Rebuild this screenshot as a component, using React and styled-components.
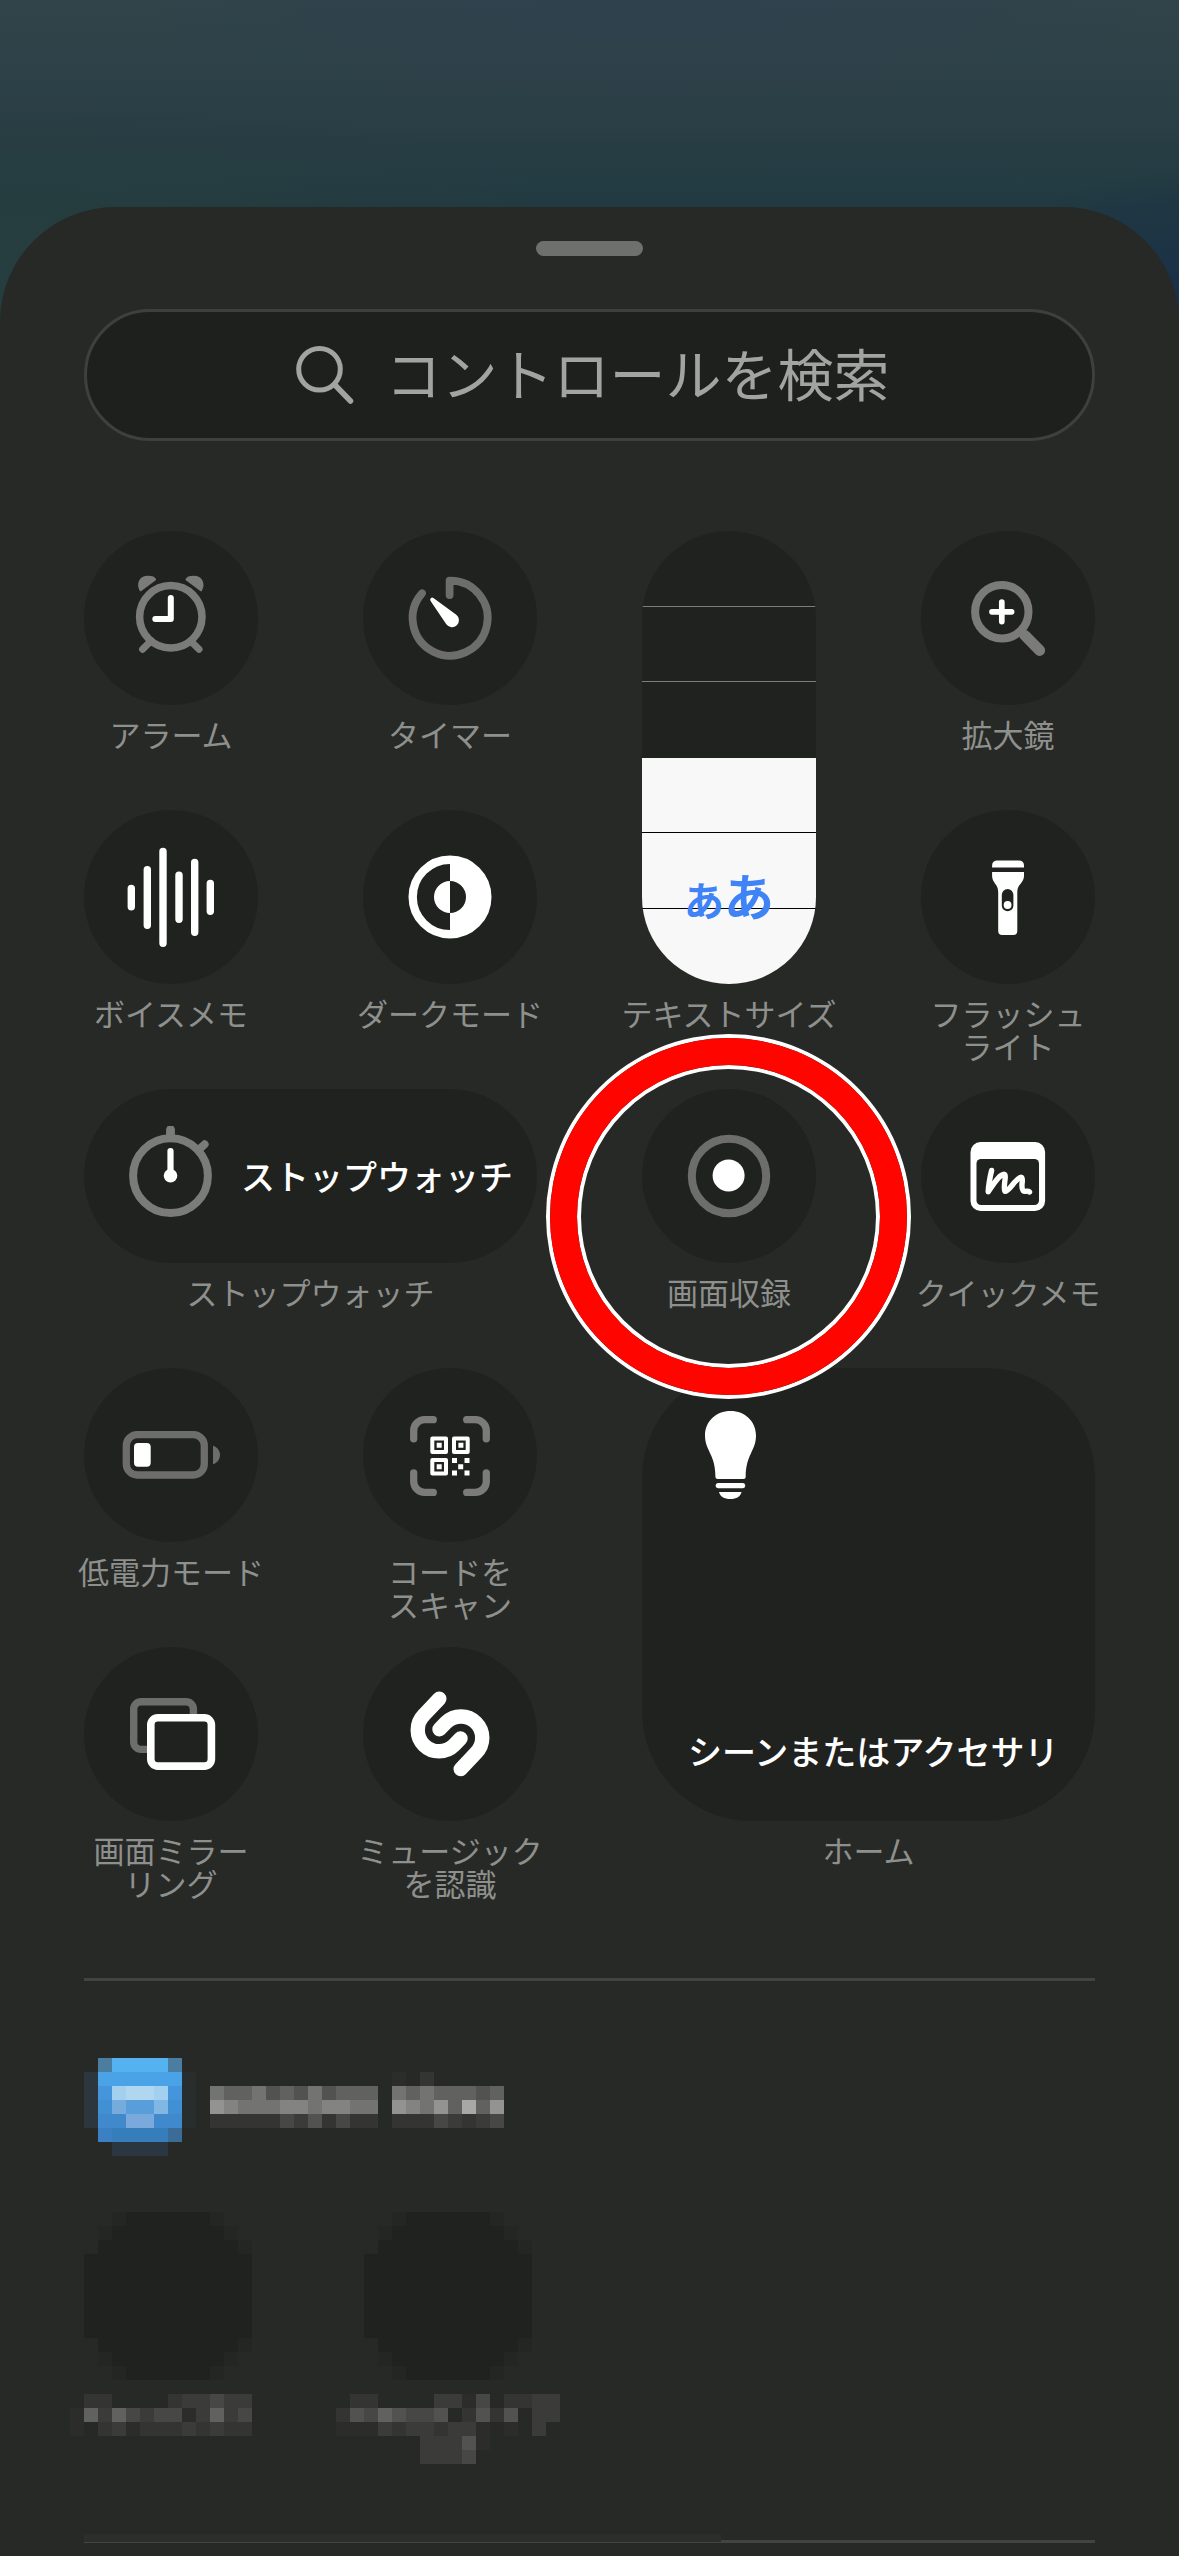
import React, { useState } from 'react';
import styled, { createGlobalStyle } from 'styled-components';

const GlobalStyle = createGlobalStyle`
body {
  margin: 0;
  background: #272926;
  font-family: "Noto Sans CJK JP", "Noto Sans", sans-serif;
}

* {
  box-sizing: border-box;
}
`;

const Page = styled.main`
min-height: 100vh;
display: flex;
flex-direction: column;
padding-top: 207px;
background:
  radial-gradient(ellipse 200px 130px at 100% 300px, #1a2f48 0%, transparent 100%),
  radial-gradient(ellipse 600px 160px at 0 250px, #273e3f 0%, transparent 100%),
  radial-gradient(ellipse 500px 110px at 55% 0, #30414e 0%, transparent 100%),
  linear-gradient(#30444a 0, #2b3f46 110px, #213a41 207px, #1f3a42 400px);
`;

const Sheet = styled.section`
flex: 1;
display: flex;
flex-direction: column;
padding: 34px 84px 13px;
border-radius: 115px 115px 0 0;
background: #272926;
`;

const Grabber = styled.div`
align-self: center;
width: 107px;
height: 15px;
border-radius: 8px;
background: #6e706e;
`;

const SearchBar = styled.label`
display: flex;
align-items: center;
justify-content: center;
gap: 32px;
height: 132px;
margin-top: 53px;
padding-left: 6px;
border: 3px solid #3e403d;
border-radius: 66px;
background: #1e201d;
color: #a2a4a1;
`;

const SearchInput = styled.input`
width: 504px;
padding: 0 0 6px;
border: 0;
outline: 0;
background: transparent;
color: inherit;
font-family: inherit;
font-size: 56px;
line-height: 80px;

&::placeholder {
  color: #a2a4a1;
  opacity: 1;
}
`;

const Grid = styled.div`
display: grid;
grid-template-columns: repeat(4, minmax(0, 1fr));
grid-auto-rows: 279px;
column-gap: 105px;
margin-top: 90px;
`;

const Tile = styled.div`
position: relative;
display: flex;
flex-direction: column;
align-items: center;
grid-column: span ${props => props.$cols || 1};
grid-row: span ${props => props.$rows || 1};
`;

const Face = styled.button`
flex: 1;
display: flex;
align-items: center;
justify-content: center;
width: 100%;
padding: 0;
border: 0;
border-radius: 87px;
background: #20221f;
color: #fff;
font-family: inherit;
font-size: 34px;
font-weight: 500;
line-height: 40px;
`;

const WideFace = styled(Face)`
justify-content: flex-start;
gap: 20px;
padding-left: 37px;
`;

const LargeFace = styled(Face)`
flex-direction: column;
align-items: flex-start;
justify-content: space-between;
padding: 37px 0 50px 37px;
border-radius: 110px;
`;

const FaceText = styled.span`
padding-left: ${props => props.$indent || 0}px;
white-space: nowrap;
`;

const Label = styled.label`
height: 105px;
padding-top: 12px;
color: #8e908d;
font-size: 31px;
line-height: 33px;
text-align: center;
white-space: pre;
`;

const SliderFrame = styled.div`
position: relative;
flex: 1;
display: flex;
width: 100%;
min-height: 0;
`;

// one hairline across the slider at the given sixth of its height
const tick = (sixth, color) => {
  const at = `round(down, ${sixth} * 100% / 6, 1px)`;
  return `transparent ${at}, ${color} ${at}, ${color} calc(${at} + 1px), transparent calc(${at} + 1px)`;
};

const Slider = styled.input`
writing-mode: vertical-lr;
direction: rtl;
appearance: none;
width: 100%;
height: 100%;
margin: 0;
border-radius: 87px;
background:
  linear-gradient(${tick(1, '#7d7e7c')}, ${tick(2, '#7d7e7c')}, ${tick(4, '#000')}, ${tick(5, '#000')}),
  linear-gradient(to top, #f8f8f8 ${props => props.$fill}%, #20221f ${props => props.$fill}%);

&::-webkit-slider-thumb {
  appearance: none;
  width: 1px;
  height: 1px;
}
`;

const SizeMark = styled.span`
position: absolute;
bottom: 55px;
left: 0;
right: 0;
display: flex;
align-items: baseline;
justify-content: center;
color: #3f83f6;
font-size: 50px;
font-weight: 700;
line-height: 60px;
pointer-events: none;
`;

const SmallMark = styled.span`
font-size: 40px;
`;

// marker ring drawn over the neighbouring tiles
const Ring = styled.span`
position: absolute;
z-index: 2;
top: -51px;
left: calc(50% - 179px);
width: 357px;
height: 357px;
border: 27px solid #ff0500;
border-radius: 50%;
box-shadow: 0 0 0 4px #fff, inset 0 0 0 4px #fff;
pointer-events: none;
`;

const Divider = styled.hr`
width: 100%;
height: 3px;
margin: 52px 0 77px;
border: 0;
background: #424441;
`;

const AppHeader = styled.div`
display: flex;
align-items: flex-start;
gap: 14px;
`;

const AppControls = styled.div`
display: flex;
gap: 112px;
margin-top: 56px;
`;

const AppControl = styled.div`
display: flex;
flex-direction: column;
align-items: center;
gap: 14px;
width: 168px;
height: 252px;
`;

const BottomDivider = styled.div`
display: flex;
height: 9px;
margin-top: 70px;
`;

const FadedLine = styled.span`
flex: 0 0 63%;
border-bottom: 1px solid #444643;
background: #2c2e2b;
`;

const SolidLine = styled.span`
flex: 1;
border-bottom: 3px solid #424441;
`;

const MosaicSvg = styled.svg`
display: block;
flex: none;
`;

const IconSvg = styled.svg`
display: block;
flex: none;
width: 100px;
height: 100px;
`;

const GRAY = '#7b7c7a';
const DIM = '#6d6e6c';
const DARK = '#20221f';

// every icon is drawn inside a 174 unit tile, cropped to its middle 100
function Icon({ children }) {
  return (
    <IconSvg viewBox="37 37 100 100" fill="none" strokeLinecap="round" strokeLinejoin="round" aria-hidden="true">
      {children}
    </IconSvg>
  );
}

const SearchIcon = () => (
  <svg width="58" height="58" viewBox="0 0 58 58" fill="none" stroke="#a2a4a1" strokeWidth="5" strokeLinecap="round" aria-hidden="true">
    <circle cx="23.5" cy="23.3" r="20.8" />
    <path d="M38.5 38.5L54.5 55" strokeWidth="5.5" />
  </svg>
);

const AlarmIcon = () => (
  <Icon>
    <g stroke={GRAY}>
      <circle cx="86.8" cy="85.8" r="31.2" strokeWidth="7.5" />
      <path d="M67 110L58.6 118.3M106.6 110L115 118.3" strokeWidth="7" />
      <path d="M56.5 59.5C53 53 55.5 45.6 64 45.6C67.5 45.6 70.5 46.5 71.3 48.5Z" fill={GRAY} strokeWidth="1.6" />
      <path d="M117.1 59.5C120.6 53 118.1 45.6 109.6 45.6C106.1 45.6 103.1 46.5 102.3 48.5Z" fill={GRAY} strokeWidth="1.6" />
    </g>
    <path d="M86.8 67V88H71.3" stroke="#fff" strokeWidth="6" />
  </Icon>
);

const TimerIcon = () => (
  <Icon>
    <path d="M86.6 64V49.6A37.5 37.5 0 1 1 59 62.3" stroke={DIM} strokeWidth="7.8" />
    <path d="M70.4 67.1L93.3 83.7A7 7 0 1 1 83.3 93.3L67.6 69.9A2 2 0 0 1 70.4 67.1Z" fill="#fff" />
  </Icon>
);

const MagnifierIcon = () => (
  <Icon>
    <g stroke={GRAY}>
      <circle cx="80.8" cy="80.8" r="26.7" strokeWidth="8" />
      <path d="M104 104.5L118.6 119.4" strokeWidth="11" />
      <path d="M100 100.5L110 110.5" strokeWidth="8" />
    </g>
    <path d="M71 80.8H90.6M80.8 71V90.6" stroke="#fff" strokeWidth="5.7" />
  </Icon>
);

const VoiceIcon = () => (
  <Icon>
    <path
      d="M47.3 78.4V96.8M63.3 59.7V115.3M79 41.5V133.3M95 65.3V109.2M110.7 52.5V122.3M126.3 73.5V101.3"
      stroke="#fff"
      strokeWidth="7.4"
    />
  </Icon>
);

const DarkModeIcon = () => (
  <Icon>
    <circle cx="87" cy="87" r="37.3" stroke="#fff" strokeWidth="8.4" />
    <path d="M87 48A39 39 0 0 1 87 126V103A16 16 0 0 0 87 71Z" fill="#fff" />
    <path d="M87 71A16 16 0 0 0 87 103Z" fill="#fff" />
  </Icon>
);

const FlashlightIcon = () => (
  <Icon>
    <path d="M71.1 57.5V55.4A5 5 0 0 1 76.1 50.4H98A5 5 0 0 1 103 55.4V57.5Z" fill="#fff" />
    <path d="M71.1 62H103V66C103 73 96.3 74 96.3 82V121A4 4 0 0 1 92.3 125H81.2A4 4 0 0 1 77.2 121V82C77.2 74 71.1 73 71.1 66Z" fill="#fff" />
    <rect x="80.8" y="79" width="11.6" height="22.2" rx="5.8" fill={DARK} />
    <circle cx="86.6" cy="95" r="3.9" fill="#fff" />
  </Icon>
);

const StopwatchIcon = () => (
  <Icon>
    <g stroke={GRAY}>
      <circle cx="86.5" cy="86.7" r="37.4" strokeWidth="8" />
      <path d="M86.5 40.5V48" strokeWidth="8.8" />
      <path d="M120.6 55.3L114.5 61" strokeWidth="8" />
    </g>
    <path d="M86.5 62V86" stroke="#fff" strokeWidth="6.2" />
    <circle cx="86.5" cy="86.7" r="6.8" fill="#fff" />
  </Icon>
);

const RecordIcon = () => (
  <Icon>
    <circle cx="87" cy="87" r="37.2" stroke={DIM} strokeWidth="8" />
    <circle cx="86.6" cy="86.5" r="16" fill="#fff" />
  </Icon>
);

const QuickMemoIcon = () => (
  <Icon>
    <rect x="49.5" y="53" width="74.6" height="69" rx="10" fill="#fff" />
    <rect x="55.5" y="70" width="62.5" height="46" rx="4.5" fill={DARK} />
    <path
      d="M70.6 81.5C68.8 89 67.5 97 67.2 102.8C71 98 77.5 85.5 83.2 85.3C86.2 86 81.5 98.5 84 102.3C88.5 102.5 94.5 88.8 100.3 88.3C103.3 89 99 97.5 102 101.5C104.5 104 107 100.5 108.5 103"
      stroke="#fff"
      strokeWidth="5.4"
    />
  </Icon>
);

const BatteryIcon = () => (
  <Icon>
    <rect x="42.3" y="66.7" width="78" height="40.3" rx="11" stroke={DIM} strokeWidth="7.3" />
    <rect x="50" y="74.9" width="16.7" height="23.9" rx="4" fill="#fff" />
    <path d="M129 77.7C133.5 79 136 83 136 87S133.5 95 129 96.3Z" fill={DIM} />
  </Icon>
);

const CodeIcon = () => (
  <Icon>
    <path
      d="M50.7 70.8V62.7A11 11 0 0 1 61.7 51.7H70.3M103.7 51.7H112.3A11 11 0 0 1 123.3 62.7V70.8M123.3 105V113.4A11 11 0 0 1 112.3 124.4H103.7M70.3 124.4H61.7A11 11 0 0 1 50.7 113.4V105"
      stroke={GRAY}
      strokeWidth="7.3"
    />
    <g stroke="#fff" strokeWidth="4">
      <rect x="69.3" y="70.4" width="13.7" height="13.7" />
      <rect x="91" y="70.4" width="13.7" height="13.7" />
      <rect x="69.3" y="91.9" width="13.7" height="13.7" />
    </g>
    <path
      d="M73.7 74.8h5v5h-5zM95.4 74.8h5v5h-5zM73.7 96.3h5v5h-5zM89 89.9h5v5h-5zM101.5 89.9h5v5h-5zM95.2 96.2h5v5h-5zM89 102.5h5v5h-5zM101.5 102.5h5v5h-5z"
      fill="#fff"
    />
  </Icon>
);

const BulbIcon = () => (
  <Icon>
    <path
      d="M88.5 43C103 43 114 53.5 114 67.5C114 83 104 86 103.7 108.5Q103.7 111 101.2 111H75.9Q73.4 111 73.4 108.5C73.4 86 63 83 63 67.5C63 53.5 74 43 88.5 43Z"
      fill="#fff"
    />
    <rect x="73.7" y="115" width="29.5" height="5.2" rx="2.6" fill="#fff" />
    <path d="M77 124H99.5C98.5 128.5 94.5 131 88.3 131S78 128.5 77 124Z" fill="#fff" />
  </Icon>
);

const MirrorIcon = () => (
  <Icon>
    <rect x="49.7" y="54.7" width="59.7" height="47.7" rx="7.5" stroke={DIM} strokeWidth="7.4" />
    <rect x="66.8" y="70.8" width="60.6" height="48.3" rx="7" fill={DARK} stroke="#fff" strokeWidth="7.6" />
  </Icon>
);

const ShazamIcon = () => (
  <Icon>
    <g stroke="#fff" strokeWidth="14.4">
      <path d="M76.3 51.7L61 67.9A21.3 21.3 0 0 0 91.1 98.1L97.5 91.5" />
      <path d="M97.7 122.1L113 105.9A21.3 21.3 0 0 0 82.9 75.7L76.5 82.3" />
    </g>
  </Icon>
);

const PALETTE = {
  1: '#2c2d2b',
  2: '#343533',
  3: '#3b3c3a',
  4: '#474846',
  5: '#525351',
  6: '#61625f',
  7: '#737472',
  8: '#838482',
  9: '#939492',
  A: '#a8a9a7',
  a: '#4a7d9f',
  b: '#54b2f0',
  c: '#4aa3e7',
  d: '#4495db',
  e: '#a3d0ee',
  f: '#b0d6f0',
  g: '#4190d3',
  h: '#76acdc',
  i: '#589edb',
  j: '#80b8e3',
  k: '#3f89cc',
  l: '#79aadb',
  m: '#282d2d',
  n: '#2b373c',
  o: '#367dbc',
  p: '#3a80c3',
  q: '#3a6c96',
  r: '#2a3640',
  x: '#20221f',
  y: '#242623',
};

const CELL = 14;

const APP_ICON = [
  '.abbbba.',
  'nccccccm',
  'ndeffedm',
  'nghiijgm',
  'nkkllkkm',
  '.pooooq.',
  '..rrrr..',
];

const APP_TITLE = [
  '.....................',
  '.............1.2.....',
  '766756575666.76766656',
  '987778878877.98796A69',
  '222224352422.22243234',
];

const APP_BUTTON = [
  '..yxxxxxxy..',
  '.yxxxxxxxxy.',
  '.xxxxxxxxxxy',
  'xxxxxxxxxxxx',
  'xxxxxxxxxxxx',
  'xxxxxxxxxxxx',
  'xxxxxxxxxxxx',
  'xxxxxxxxxxxx',
  'xxxxxxxxxxxx',
  '.xxxxxxxxxxy',
  '.yxxxxxxxxy.',
  '..yxxxxxxy..',
];

const APP_LABELS = [
  [
    '.22....233433.',
    '1636434413634.',
    '1.23122232322.',
  ],
  [
    '.22....3314.2233',
    '25465445.2525.33',
    '11132332331.1.3.',
    '......33351.....',
    '......3334......',
  ],
];

function Mosaic({ rows }) {
  return (
    <MosaicSvg width={rows[0].length * CELL} height={rows.length * CELL} shapeRendering="crispEdges" aria-hidden="true">
      {rows.map((row, y) => row.split('').map((cell, x) => (
        PALETTE[cell] && (
          <rect key={`${x}-${y}`} x={x * CELL} y={y * CELL} width={CELL} height={CELL} fill={PALETTE[cell]} />
        )
      )))}
    </MosaicSvg>
  );
}

function TextSize() {
  const [step, setStep] = useState(3);

  return (
    <Tile $rows={2}>
      <SliderFrame>
        <Slider
          id="text-size"
          type="range"
          min="0"
          max="6"
          value={step}
          $fill={(step / 6) * 100}
          onChange={e => setStep(Number(e.target.value))}
        />
        <SizeMark aria-hidden="true"><SmallMark>あ</SmallMark>あ</SizeMark>
      </SliderFrame>
      <Label htmlFor="text-size">テキストサイズ</Label>
    </Tile>
  );
}

function Control({ id, label, icon: ControlIcon, marked }) {
  return (
    <Tile>
      <Face id={id} type="button"><ControlIcon /></Face>
      <Label htmlFor={id}>{label}</Label>
      {marked && <Ring />}
    </Tile>
  );
}

function App() {
  return (
    <Page>
      <GlobalStyle />
      <Sheet>
        <Grabber />
        <SearchBar>
          <SearchIcon />
          <SearchInput type="text" placeholder="コントロールを検索" aria-label="コントロールを検索" />
        </SearchBar>
        <Grid>
          <Control id="alarm" label="アラーム" icon={AlarmIcon} />
          <Control id="timer" label="タイマー" icon={TimerIcon} />
          <TextSize />
          <Control id="magnifier" label="拡大鏡" icon={MagnifierIcon} />
          <Control id="voice-memo" label="ボイスメモ" icon={VoiceIcon} />
          <Control id="dark-mode" label="ダークモード" icon={DarkModeIcon} />
          <Control id="flashlight" label={'フラッシュ\nライト'} icon={FlashlightIcon} />
          <Tile $cols={2}>
            <WideFace id="stopwatch" type="button">
              <StopwatchIcon />
              <FaceText>ストップウォッチ</FaceText>
            </WideFace>
            <Label htmlFor="stopwatch">ストップウォッチ</Label>
          </Tile>
          <Control id="screen-recording" label="画面収録" icon={RecordIcon} marked />
          <Control id="quick-memo" label="クイックメモ" icon={QuickMemoIcon} />
          <Control id="low-power" label="低電力モード" icon={BatteryIcon} />
          <Control id="scan-code" label={'コードを\nスキャン'} icon={CodeIcon} />
          <Tile $cols={2} $rows={2}>
            <LargeFace id="home" type="button">
              <BulbIcon />
              <FaceText $indent={9}>シーンまたはアクセサリ</FaceText>
            </LargeFace>
            <Label htmlFor="home">ホーム</Label>
          </Tile>
          <Control id="mirroring" label={'画面ミラー\nリング'} icon={MirrorIcon} />
          <Control id="recognize-music" label={'ミュージック\nを認識'} icon={ShazamIcon} />
        </Grid>
        <Divider />
        <AppHeader>
          <Mosaic rows={APP_ICON} />
          <Mosaic rows={APP_TITLE} />
        </AppHeader>
        <AppControls>
          {APP_LABELS.map((rows, i) => (
            <AppControl key={i}>
              <Mosaic rows={APP_BUTTON} />
              <Mosaic rows={rows} />
            </AppControl>
          ))}
        </AppControls>
        <BottomDivider>
          <FadedLine />
          <SolidLine />
        </BottomDivider>
      </Sheet>
    </Page>
  );
}

export default App;
